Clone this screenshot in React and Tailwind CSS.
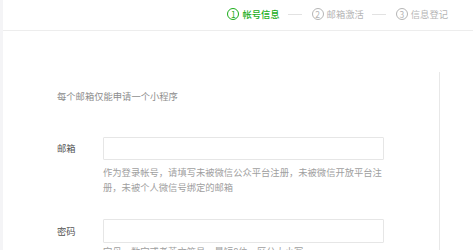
const STEPS = [
    { n: '1', label: '帐号信息', active: true },
    { n: '2', label: '邮箱激活', active: false },
    { n: '3', label: '信息登记', active: false },
];

function Step({ n, label, active }) {
    return (
        <div className={`flex items-center gap-[3px] ${active ? 'text-[#1aad19]' : 'text-[#b5b5b5]'}`}>
            <span className="w-[12px] h-[12px] rounded-full border border-current flex items-center justify-center text-[8.5px] leading-none">
                {n}
            </span>
            <span className={`text-[9.3px] leading-[12px] ${active ? 'font-medium' : ''}`}>{label}</span>
        </div>
    );
}

export default function App() {
    return (
        <div
            className="w-[473px] h-[250px] overflow-hidden flex bg-white"
            style={{ fontFamily: '"Noto Sans CJK SC", "Noto Sans", sans-serif' }}
        >
            <div className="w-[3px] shrink-0 bg-[#f4f4f6]" />
            <div className="flex-1 flex flex-col">
                {/* Steps */}
                <div className="h-[31px] shrink-0 border-b border-[#ededed] flex justify-end items-start pt-[8px] pr-[25px]">
                    {STEPS.map((s, i) => (
                        <div key={s.n} className="flex items-center">
                            {i > 0 && <span className="w-[14px] h-px bg-[#e2e2e2] ml-[8px] mr-[10px]" />}
                            <Step {...s} />
                        </div>
                    ))}
                </div>

                {/* Form card */}
                <div className="mt-[41px] mr-[33px] flex-1 border-r border-[#e8e8e8] pl-[54px] pt-[17px]">
                    <p className="text-[9.3px] leading-[15px] text-[#8d8d8d]">每个邮箱仅能申请一个小程序</p>

                    <div className="mt-[33px] flex">
                        <label className="w-[46px] shrink-0 text-[9.3px] leading-[23px] text-[#555]">邮箱</label>
                        <div className="w-[281px]">
                            <input className="block w-full h-[23px] border border-[#e6e6e6] rounded-[1px] bg-white outline-none" />
                            <p className="mt-[5px] text-[9.3px] leading-[15px] text-[#a0a0a0]">
                                作为登录帐号，请填写未被微信公众平台注册，未被微信开放平台注册，未被个人微信号绑定的邮箱
                            </p>
                        </div>
                    </div>

                    <div className="mt-[24px] flex">
                        <label className="w-[46px] shrink-0 text-[9.3px] leading-[24px] text-[#555]">密码</label>
                        <div className="w-[281px]">
                            <input type="password" className="block w-full h-[24px] border border-[#e6e6e6] rounded-[1px] bg-white outline-none" />
                            <p className="mt-[1px] text-[9.3px] leading-[15px] text-[#a0a0a0]">
                                字母、数字或者英文符号，最短8位，区分大小写
                            </p>
                        </div>
                    </div>
                </div>
            </div>
        </div>
    );
}
